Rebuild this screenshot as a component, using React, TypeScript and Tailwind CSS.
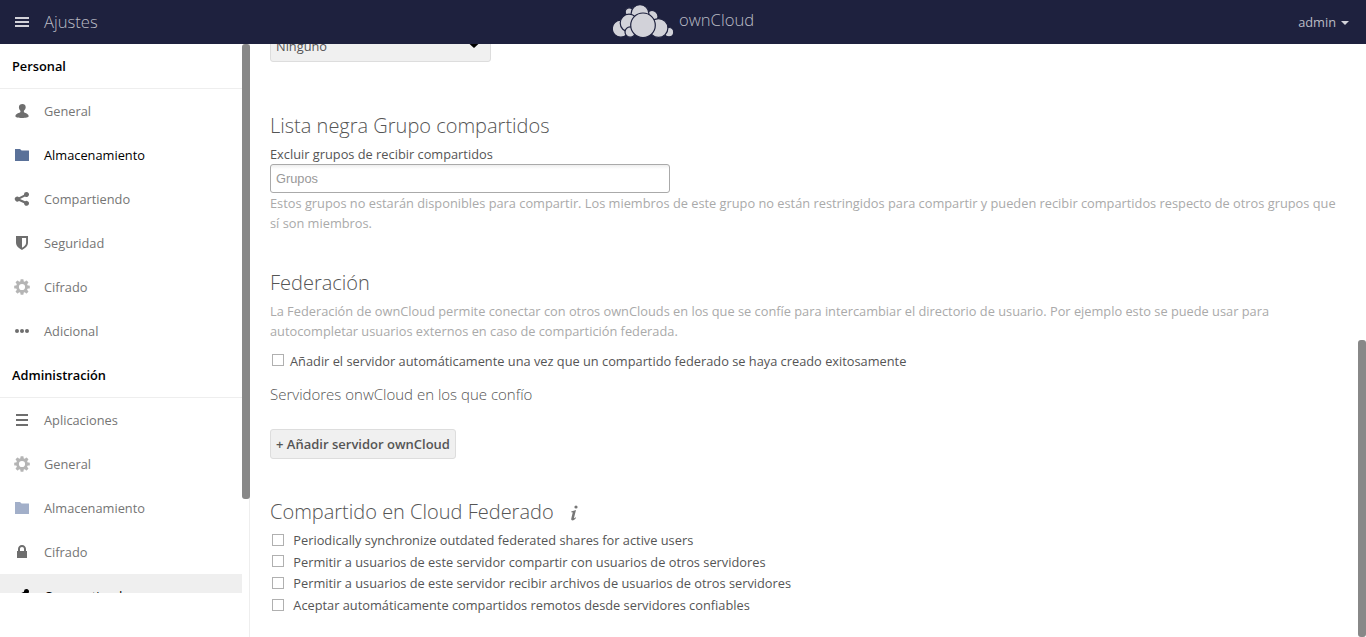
import type { ReactNode } from "react";

const gearTeeth = [0, 45, 90, 135, 180, 225, 270, 315];

function Svg({ children, className = "" }: { children: ReactNode; className?: string }) {
  return (
    <svg viewBox="0 0 16 16" width="16" height="16" fill="currentColor" className={"shrink-0 " + className}>
      {children}
    </svg>
  );
}

const UserIcon = () => (
  <Svg className="text-[#6e6e6e]">
    <path d="M8.400 1C6.400 1 4.900 2.200 4.900 4.200c0 1.500.7 2.700 1.500 3.500.2.700 0 1.400-.4 1.700C4.500 10 1.400 10.900 1.400 13.300c0 .9 2.800 1.700 6.600 1.700s6.700-.8 6.700-1.700c0-2.500-3.200-3.300-4.400-3.900-.5-.4-.5-1-.4-1.700.9-.8 1.800-2 1.800-3.500C11.700 2.200 10.300 1 8.400 1z" />
  </Svg>
);
const FolderIcon = ({ className }: { className: string }) => (
  <Svg className={className}>
    <path d="M1.300 2h4.700l1.600 1.500H14.600c.2 0 .4.200.4.400V13.700c0 .2-.1.300-.3.300H1.300c-.2 0-.3-.1-.3-.3V2.300c0-.2.100-.3.300-.3z" />
  </Svg>
);
const ShareIcon = ({ className }: { className: string }) => (
  <Svg className={className}>
    <path d="M12.500 1A2.500 2.500 0 0 0 10 3.700L5 6.200a2.500 2.500 0 1 0 0 3.700l5 2.400a2.500 2.500 0 1 0 1-2L6 8.100 11 5.500A2.500 2.500 0 1 0 12.500 1z" />
  </Svg>
);
const ShieldIcon = () => (
  <Svg className="text-[#6e6e6e]">
    <path fillRule="evenodd" d="M2 1h12v6.600c0 3.400-2.800 6-6 7.300C4.800 13.600 2 11 2 7.600zM8 2.900v9.900c2.400-1.200 4.100-3 4.100-5.300V2.900z" />
  </Svg>
);
const GearIcon = () => (
  <Svg className="text-[#b5b5b5]">
    {gearTeeth.map((a) => (
      <rect key={a} x="6.400" y="0.200" width="3.200" height="3.500" rx=".7" transform={`rotate(${a} 8 8)`} />
    ))}
    <circle cx="8" cy="8" r="4.500" fill="none" stroke="currentColor" strokeWidth="2.800" />
  </Svg>
);
const DotsIcon = () => (
  <Svg className="text-[#6e6e6e]">
    <circle cx="3" cy="8" r="2" />
    <circle cx="8" cy="8" r="2" />
    <circle cx="13" cy="8" r="2" />
  </Svg>
);
const ListIcon = () => (
  <Svg className="text-[#6e6e6e]">
    <path d="M2 2h12v2H2zM2 7h12v2H2zM2 12h12v2H2z" />
  </Svg>
);
const LockIcon = () => (
  <Svg className="text-[#6e6e6e]">
    <path fillRule="evenodd" d="M8 1C5.600 1 4 2.800 4 5v2H3v7h10V7h-1V5c0-2.200-1.600-4-4-4zm0 2c1.300 0 2 .9 2 2v2H6V5c0-1.100.7-2 2-2z" />
  </Svg>
);

function NavHeading({ children }: { children: ReactNode }) {
  return (
    <h2 className="flex h-[45px] items-center border-b border-[#eee] px-3 text-[12.8px] font-semibold text-black">
      {children}
    </h2>
  );
}

function NavItem({ icon, label, active, dark }: { icon: ReactNode; label: string; active?: boolean; dark?: boolean }) {
  return (
    <a
      className={
        "flex h-11 items-center gap-3.5 pl-3.5 text-[12.8px] " +
        (active ? "bg-[#efefef] " : "") +
        (active || dark ? "text-black" : "text-[#757575]")
      }
    >
      {icon}
      <span>{label}</span>
    </a>
  );
}

function Check({ label, gap, box = "mt-[3px]" }: { label: string; gap: string; box?: string }) {
  return (
    <label className={"flex items-start pl-0.5 " + gap}>
      <span className={"block size-3 shrink-0 border border-[#b0b0b0] bg-white " + box} />
      <span>{label}</span>
    </label>
  );
}

function CloudLogo() {
  const c: [number, number, number][] = [
    [16.200, 11.800, 4], [39, 16.500, 6], [27, 13.600, 8.900], [7.800, 28.700, 8.500],
    [16, 23, 8.800], [17.200, 32, 5.200], [56, 32.200, 4.700], [45.500, 28, 9.400], [30, 25.300, 12.300],
  ];
  return (
    <svg width="61" height="38" viewBox="0 0 61 38" className="shrink-0">
      {c.map(([x, y, r], i) => (
        <circle key={i} cx={x} cy={y} r={r} fill="#d2d2d9" stroke="#1e213e" strokeWidth="1.200" />
      ))}
    </svg>
  );
}

export default function App() {
  return (
    <div className="flex h-[637px] w-[1366px] flex-col overflow-hidden bg-white font-['Open_Sans',sans-serif] text-[12.81px] leading-[20px] text-[#555]">
      <header className="grid h-11 shrink-0 grid-cols-3 bg-[#1e213e] text-[#bbbcc5]">
        <div className="flex items-center pl-3.5">
          <svg width="16" height="16" viewBox="0 0 16 16" fill="#d2d2d9">
            <path d="M1 3h14v2H1zM1 7h14v2H1zM1 11h14v2H1z" />
          </svg>
          <span className="ml-3.5 text-[16.640px] font-light">Ajustes</span>
        </div>
        <div className="flex items-start pl-[157.670px]">
          <CloudLogo />
          <span className="ml-[5px] mt-[10px] text-[16.640px] font-light">ownCloud</span>
        </div>
        <div className="flex items-center justify-end gap-[5px] pr-[17px]">
          <span>admin</span>
          <svg width="8" height="4" viewBox="0 0 8 4" fill="#d2d2d9" className="mt-0.5">
            <path d="M0 0h8L4 4z" />
          </svg>
        </div>
      </header>
      <div className="flex min-h-0 flex-1">
        <aside className="flex w-[250px] shrink-0 border-r border-[#eee]">
          <nav className="h-[549px] w-[242px] shrink-0 overflow-hidden">
            <NavHeading>Personal</NavHeading>
            <NavItem icon={<UserIcon />} label="General" />
            <NavItem icon={<FolderIcon className="text-[#5a7199]" />} label="Almacenamiento" dark />
            <NavItem icon={<ShareIcon className="text-[#6e6e6e]" />} label="Compartiendo" />
            <NavItem icon={<ShieldIcon />} label="Seguridad" />
            <NavItem icon={<GearIcon />} label="Cifrado" />
            <NavItem icon={<DotsIcon />} label="Adicional" />
            <NavHeading>Administración</NavHeading>
            <NavItem icon={<ListIcon />} label="Aplicaciones" />
            <NavItem icon={<GearIcon />} label="General" />
            <NavItem icon={<FolderIcon className="text-[#a2afc9]" />} label="Almacenamiento" />
            <NavItem icon={<LockIcon />} label="Cifrado" />
            <NavItem icon={<ShareIcon className="text-black" />} label="Compartiendo" active />
          </nav>
          <div className="-mr-px h-[455px] w-2 shrink-0 rounded-[3px] bg-[#888]" />
        </aside>
        <main className="min-w-0 flex-1 px-5">
          <div className="flex h-[18px] items-end overflow-hidden">
            <div className="flex h-8 w-[221px] shrink-0 items-center justify-between rounded-[3px] border border-[#ddd] bg-[#f0f0f0] pl-[5px] pr-[11px]">
              <span>Ninguno</span>
              <svg width="10" height="6" viewBox="0 0 10 6" fill="#000" className="-mt-0.5">
                <path d="M0 0h10v1.500L5 6 0 1.500z" />
              </svg>
            </div>
          </div>

          <section className="pt-[48px]">
            <h2 className="text-[20px] font-light leading-[32px]">Lista negra Grupo compartidos</h2>
            <p className="mt-[2px]">Excluir grupos de recibir compartidos</p>
            <div className="flex h-[29px] w-[400px] items-center rounded-[3px] border border-[#aaa] bg-[linear-gradient(#eee,#fff_15%)] px-[5px] font-['Liberation_Sans',sans-serif] text-[#999]">
              Grupos
            </div>
            <p className="text-[#aaa]">
              Estos grupos no estarán disponibles para compartir. Los miembros de este grupo no están restringidos para
              compartir y pueden recibir compartidos respecto de otros grupos que sí son miembros.
            </p>
          </section>

          <section className="pt-[34px]">
            <h2 className="text-[20px] font-light leading-[32px]">Federación</h2>
            <p className="mt-[2px] text-[#aaa]">
              La Federación de ownCloud permite conectar con otros ownClouds en los que se confíe para intercambiar el
              directorio de usuario. Por ejemplo esto se puede usar para autocompletar usuarios externos en caso de
              compartición federada.
            </p>
            <div className="mt-[10px]">
              <Check gap="gap-1.5" label="Añadir el servidor automáticamente una vez que un compartido federado se haya creado exitosamente" />
            </div>
            <h3 className="mt-[11px] text-[15px] font-light leading-[24px]">Servidores onwCloud en los que confío</h3>
            <button className="mt-[23px] flex h-[30px] w-[186px] items-center justify-center whitespace-nowrap rounded-[3px] border border-[#ddd] bg-[#f0f0f0] text-[13px] font-semibold">
              + Añadir servidor ownCloud
            </button>
          </section>

          <section className="pt-[37px]">
            <h2 className="flex items-center text-[20px] font-light leading-[32px]">
              Compartido en Cloud Federado
              <svg width="16" height="16" viewBox="0 0 16 16" fill="#777" className="ml-[12px] mt-0.5">
                <circle cx="10" cy="2" r="1.600" />
                <path d="M5.200 6.500 10 5 8.100 12.500c-.2.900.2 1 1.700-.3l.3.500C8.700 14.700 7.200 15.700 6 15.300c-.9-.3-.9-1.300-.6-2.300l1.200-4.900c.2-.9-.1-1-1.400-.9z" />
              </svg>
            </h2>
            <div className="mt-[2px] flex flex-col gap-[1.600px]">
              <Check gap="gap-[9.300px]" box="mt-1" label="Periodically synchronize outdated federated shares for active users" />
              <Check gap="gap-[9.300px]" label="Permitir a usuarios de este servidor compartir con usuarios de otros servidores" />
              <Check gap="gap-[9.300px]" box="mt-1" label="Permitir a usuarios de este servidor recibir archivos de usuarios de otros servidores" />
              <Check gap="gap-[9.300px]" box="mt-1" label="Aceptar automáticamente compartidos remotos desde servidores confiables" />
            </div>
          </section>
        </main>
        <div className="mt-[296px] h-[297px] w-2 shrink-0 rounded-[3px] bg-[#888]" />
      </div>
    </div>
  );
}
